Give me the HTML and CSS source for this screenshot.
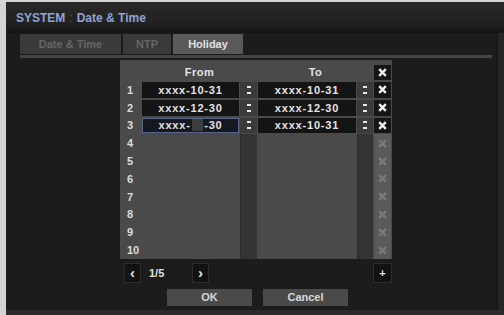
FILE: index.html
```html
<!DOCTYPE html>
<html lang="en">

<head>
    <meta charset="UTF-8">
    <meta name="viewport" content="width=device-width, initial-scale=1.0">
    <title>SYSTEM : Date &amp; Time</title>
    <link rel="stylesheet" href="styles.css">
</head>

<body>
    <div class="window">
        <div class="titlebar">
            <span>SYSTEM</span><span class="sep">:</span><span>Date &amp; Time</span>
        </div>

        <div class="tabs">
            <div class="tab">Date &amp; Time</div>
            <div class="tab">NTP</div>
            <div class="tab active">Holiday</div>
        </div>

        <div class="content">
            <div class="holiday">
                <div class="grid">
                    <div class="head"></div>
                    <div class="head from">From</div>
                    <div class="head to">To</div>
                    <div class="head"><span class="xbtn"><svg viewBox="0 0 10 10"><path d="M2 2L8 8M8 2L2 8" /></svg></span></div>

                    <div class="num">1</div>
                    <div class="field">xxxx-10-31</div>
                    <div class="spin"><i></i><i></i></div>
                    <div class="field">xxxx-10-31</div>
                    <div class="spin"><i></i><i></i></div>
                    <div class="del"><svg viewBox="0 0 10 10"><path d="M2 2L8 8M8 2L2 8" /></svg></div>

                    <div class="num">2</div>
                    <div class="field">xxxx-12-30</div>
                    <div class="spin"><i></i><i></i></div>
                    <div class="field">xxxx-12-30</div>
                    <div class="spin"><i></i><i></i></div>
                    <div class="del"><svg viewBox="0 0 10 10"><path d="M2 2L8 8M8 2L2 8" /></svg></div>

                    <div class="num">3</div>
                    <div class="field focus">xxxx-<span class="sel">&nbsp;&nbsp;&nbsp;</span>-30</div>
                    <div class="spin"><i></i><i></i></div>
                    <div class="field">xxxx-10-31</div>
                    <div class="spin"><i></i><i></i></div>
                    <div class="del"><svg viewBox="0 0 10 10"><path d="M2 2L8 8M8 2L2 8" /></svg></div>
                </div>
                <div class="grid empty" id="emptyRows"></div>

                <div class="pager">
                    <div class="pbtn">&lsaquo;</div>
                    <div class="page">1/5</div>
                    <div class="pbtn">&rsaquo;</div>
                    <div class="pbtn add">+</div>
                </div>

                <div class="actions">
                    <div class="btn">OK</div>
                    <div class="btn">Cancel</div>
                </div>
            </div>
        </div>
        <div class="footer"></div>
    </div>

    <script>
        const emptyRows = document.querySelector("#emptyRows");
        const cross = '<svg viewBox="0 0 10 10"><path d="M2 2L8 8M8 2L2 8" /></svg>';

        for (let i = 4; i <= 10; i++) {
            emptyRows.innerHTML += `
                <div class="num">${i}</div>
                <div class="field off"></div>
                <div class="spin off"></div>
                <div class="field off"></div>
                <div class="spin off"></div>
                <div class="del off">${cross}</div>`;
        }
    </script>
</body>

</html>
```

FILE: styles.css
```css
body {
    margin: 0;
    background-color: #d4d4d4;
    font-family: "Liberation Sans", Arial, sans-serif;
    font-weight: bold;
}

.window {
    margin: 2px 0 0 6px;
    width: 498px;
    height: 313px;
    background-color: #1c1c1c;
    box-shadow: inset -6px 0 0 #262626, inset -7px 0 0 #141414;
    display: flex;
    flex-direction: column;
}

.titlebar {
    height: 31px;
    padding-left: 10px;
    display: flex;
    align-items: center;
    gap: 4px;
    font-size: 12px;
    color: #8ea3d6;
    background: linear-gradient(#282828, #222 65%, #151515);
}

.titlebar .sep {
    color: #555;
    font-weight: normal;
}

.tabs {
    margin: 0 12px 0 14px;
    display: flex;
    gap: 2px;
    border-bottom: 3px solid #444;
    height: 22px;
}

.tab {
    height: 20px;
    margin-top: 1px;
    padding: 0 12px;
    background-color: #3a3a3a;
    color: #666;
    font-size: 11px;
    line-height: 20px;
    text-align: center;
}

.tab:first-child {
    width: 77px;
}

.tab:nth-child(2) {
    width: 24px;
}

.tab.active {
    width: 46px;
    background-color: #5a5a5a;
    color: #e2e2e2;
}

.content {
    padding-left: 114px;
}

.holiday {
    width: 272px;
}

.grid {
    display: grid;
    grid-template-columns: 21px 97px 17px 98px 16px 17px;
    column-gap: 1px;
    grid-auto-rows: 17.8px;
    background-color: #4a4a4a;
    padding-right: 1px;
    color: #e4e4e4;
    font-size: 11px;
}

.grid:first-child {
    margin-top: 2px;
    grid-template-rows: 21px;
}

.head {
    display: flex;
    align-items: center;
    justify-content: center;
    padding-top: 3px;
    letter-spacing: 0.5px;
}

.head.from,
.head.to {
    grid-column: span 2;
}

.xbtn {
    width: 17px;
    height: 15px;
    background-color: #151515;
    display: flex;
    align-items: center;
    justify-content: center;
}

svg {
    width: 11px;
    height: 11px;
}

svg path {
    stroke: #f0f0f0;
    stroke-width: 2.2;
    fill: none;
}

.num {
    display: flex;
    align-items: center;
    padding-left: 7px;
    font-size: 11px;
    color: #dcdcdc;
}

.grid.empty .num:last-of-type {
    padding-left: 2px;
}

.field {
    margin: 1px 0;
    background-color: #141414;
    display: flex;
    align-items: center;
    justify-content: center;
    letter-spacing: 0.8px;
}

.field.focus {
    box-shadow: inset 0 0 0 1px #56648e;
    background-color: #161820;
}

.sel {
    background-color: #3c3c3c;
    margin: 0 1px;
}

.field.off {
    background-color: #4a4a4a;
}

.spin {
    margin: 1px 0;
    background-color: #3b3b3b;
    display: flex;
    flex-direction: column;
    align-items: center;
    justify-content: center;
    gap: 4px;
}

.spin i {
    width: 4px;
    height: 2px;
    background-color: #e8e8e8;
}

.spin.off {
    margin: 0;
    background-color: #343434;
    border-left: 1px solid #2a2a2a;
}

.del {
    margin: 1px 0;
    background-color: #151515;
    display: flex;
    align-items: center;
    justify-content: center;
}

.del.off {
    margin: 0;
    background-color: #5a5a5a;
}

.del.off svg path {
    stroke: #7a7a7a;
}

.pager {
    margin-top: 5px;
    height: 19px;
    display: flex;
    align-items: center;
    padding-left: 4px;
    color: #e0e0e0;
    font-size: 11px;
}

.pbtn {
    width: 15px;
    height: 18px;
    background-color: #121212;
    border: 1px solid #2c2c2c;
    display: flex;
    align-items: center;
    justify-content: center;
    font-size: 15px;
    line-height: 18px;
}

.page {
    width: 43px;
    padding-left: 8px;
}

.pbtn.add {
    margin-left: auto;
    width: 17px;
    font-size: 11px;
}

.actions {
    margin-top: 6px;
    display: flex;
    justify-content: center;
    gap: 11px;
    padding-left: 3px;
}

.btn {
    width: 85px;
    height: 17px;
    background-color: #4a4a4a;
    color: #d8d8d8;
    font-size: 11px;
    line-height: 17px;
    text-align: center;
}

.footer {
    margin-top: auto;
    height: 5px;
    background-color: #2b2b2b;
}
```
